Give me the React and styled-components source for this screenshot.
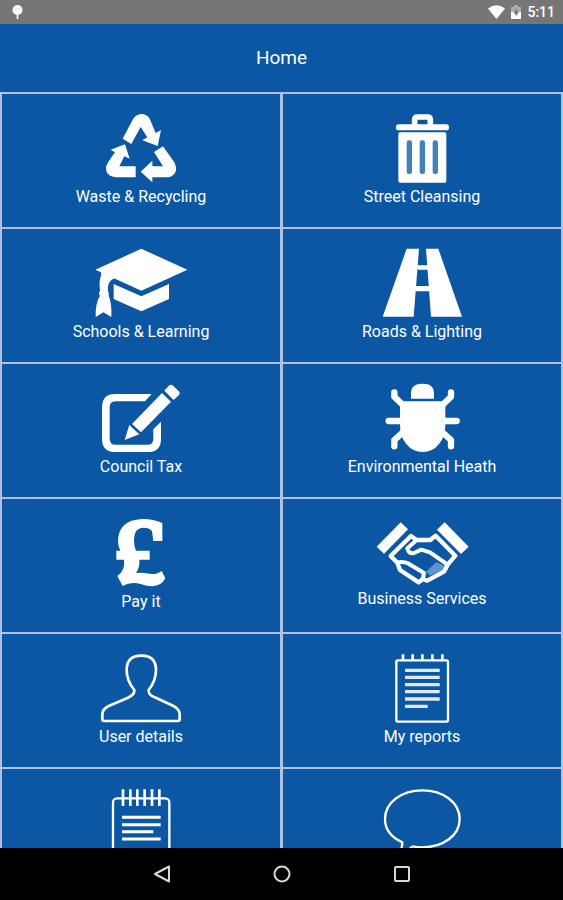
import React from "react"
import styled, { createGlobalStyle } from "styled-components"

const GlobalStyle = createGlobalStyle`
    * {
        box-sizing: border-box;
    }

    body {
        margin: 0;
        background: #0b57a4;
        font-family: Roboto, "Liberation Sans", sans-serif;
    }
`

const Screen = styled.div`
    display: flex;
    flex-direction: column;
    height: 100vh;
    color: white;
    background: #0b57a4;
`

const StatusBar = styled.div`
    display: flex;
    flex: none;
    align-items: center;
    justify-content: space-between;
    height: 24px;
    padding: 0 8px 0 12px;
    background: #767676;
`

const StatusGroup = styled.div`
    display: flex;
    align-items: center;
    gap: 6px;
    font-size: 14px;
    font-weight: 500;
    line-height: 24px;
`

const Header = styled.header`
    display: flex;
    flex: none;
    align-items: center;
    justify-content: center;
    height: 68px;

    h1 {
        margin: 0;
        font-size: 19px;
        font-weight: 400;
        line-height: 24px;
    }
`

const Menu = styled.main`
    flex: 1;
    min-height: 0;
    overflow-y: auto;
    scrollbar-width: none;
`

const Grid = styled.div`
    display: grid;
    grid-template-columns: 1fr 1fr;
    grid-auto-rows: 133px;
    gap: 2px 3px;
    padding: 2px;
    background: #b1c1e2;
`

const Tile = styled.button`
    display: flex;
    flex-direction: column;
    align-items: center;
    padding: 18px 0 0;
    border: none;
    color: white;
    background: #0b57a4;
    font-family: inherit;
    font-size: 16px;
    line-height: 20px;
    cursor: pointer;

    svg {
        flex: none;
        width: 96px;
        height: ${props => (props.$short ? 72 : 75)}px;
    }
`

const NavBar = styled.nav`
    display: flex;
    flex: none;
    align-items: center;
    justify-content: center;
    gap: 80px;
    height: 52px;
    background: black;

    button {
        display: flex;
        align-items: center;
        justify-content: center;
        width: 40px;
        height: 40px;
        padding: 0;
        border: none;
        background: transparent;
        cursor: pointer;
    }
`

// all tile drawings share a 3:1 scale, x and y give the corner of their canvas
const Drawing = ({ x, y, short, children }) => (
    <svg viewBox={`${x} ${y} 288 ${short ? 216 : 225}`} fill="white" aria-hidden="true">
        {children}
    </svg>
)

const Line = props => (
    <path fill="none" stroke="white" strokeLinejoin="round" {...props}/>
)

const RecycleIcon = () => (
    <Drawing x={9} y={21}>
        <path d="M98 101 L129 43 Q138 28 154 27 Q170 27 179 41 L197 84 L213 75 L203 123 L157 106 L172 97 L152 66 L124 117 Z"/>
        <path d="M62 134 L105 118 L119 161 L103 154 L88 184 H137 V217 H76 Q46 214 48 186 Q50 176 75 142 Z"/>
        <path d="M192 141 L219 124 L253 172 Q262 190 256 202 Q248 217 232 217 H187 V232 L152 200 L187 167 V184 H219 Z"/>
    </Drawing>
)

const BinIcon = () => (
    <Drawing x={12} y={21}>
        <Line d="M134 62 V44 Q134 36 142 36 H173 Q181 36 181 44 V62" strokeWidth="17"/>
        <rect x="78" y="58" width="159" height="18" rx="8"/>
        <rect x="85" y="82" width="144" height="151" rx="5"/>
        <g fill="#4282bb">
            <rect x="110" y="106" width="16" height="101" rx="7"/>
            <rect x="149" y="106" width="16" height="101" rx="7"/>
            <rect x="188" y="106" width="16" height="101" rx="7"/>
        </g>
    </Drawing>
)

const CapIcon = () => (
    <Drawing x={39} y={36}>
        <path d="M46 104 L184 41 L322 104 L184 167 Z"/>
        <path d="M101 147 L184 184 L267 147 V192 L184 229 L101 192 Z"/>
        <path d="M62 108 L106 128 Q80 138 84 168 Q89 176 86 182 Q96 206 94 246 L70 232 L47 246 Q46 204 60 182 Q54 175 60 168 Q56 136 64 120 Z"/>
    </Drawing>
)

const RoadIcon = () => (
    <Drawing x={12} y={36}>
        <path d="M110 41 H147 L131 245 H38 Z"/>
        <path d="M168 41 H205 L276 245 H183 Z"/>
        <path d="M142 91 H174 V104 H142 Z M136 153 H178 V169 H136 Z"/>
    </Drawing>
)

const PencilIcon = () => (
    <Drawing x={39} y={36}>
        <path d="M215 72 H106 Q66 72 66 112 V206 Q66 246 106 246 H204 Q243 246 243 206 V155 L220 178 V206 Q220 224 204 224 H106 Q89 224 89 206 V112 Q89 94 106 94 H195 Z"/>
        <path d="M156 162 L246 69 L273 95 L183 187 Z"/>
        <path d="M148 165 L178 193 L134 210 Z"/>
        <path d="M253 62 L266 48 Q273 41 280 48 L296 63 Q302 70 296 76 L281 90 Z"/>
    </Drawing>
)

const BugIcon = () => (
    <Drawing x={102} y={36}>
        <path d="M213 86 V70 Q213 41 248 41 Q282 41 282 70 V86 Z"/>
        <path d="M192 94 H304 L316 106 V165 Q316 200 297 222 Q278 246 248 246 Q218 246 199 222 Q180 200 180 165 V106 Z"/>
        <Line
            d="M163 67 V80 L192 108 M333 67 V80 L304 108 M146 153 H350 M163 229 V210 L192 184 M333 229 V210 L304 184"
            strokeWidth="19"
            strokeLinecap="round"
        />
    </Drawing>
)

const PoundIcon = () => (
    <Drawing x={9} y={36}>
        <path d="M217 108 V54 Q188 41 156 42 Q85 46 84 108 Q84 122 91 137 H79 V164 H102 Q106 196 82 213 L98 243 Q122 229 152 237 Q208 256 226 220 L215 198 Q198 212 168 205 Q155 202 138 204 Q150 188 148 164 H179 V137 H138 Q131 122 132 102 Q134 68 160 68 Q178 68 186 78 L190 108 Z"/>
    </Drawing>
)

const HandshakeIcon = () => (
    <Drawing x={72} y={36} short>
        <path d="M80 125 L152 52 L174 73 L102 146 Z"/>
        <path d="M261 74 L284 52 L356 125 L333 147 Z"/>
        <path d="M228 200 L258 172 L286 182 L280 194 L240 212 Z" fill="#5f93cd"/>
        <Line
            d="M183 93 L122 153 L142 173 L150 195 L206 232 L218 222 L232 227 L282 200 L293 179 L316 152 L257 92 L241 105 H200 Z"
            strokeWidth="13"
        />
        <Line
            d="M200 105 L172 130 Q176 148 192 144 L214 134 L240 142 L293 179 M142 173 Q158 168 176 176 L222 204 L218 226"
            strokeWidth="12"
        />
    </Drawing>
)

const UserIcon = () => (
    <Drawing x={39} y={36}>
        <Line
            d="M72 243 Q67 243 67 238 V222 Q68 206 88 197 L144 173 Q164 164 163 150 Q140 122 140 90 Q140 47 184 47 Q228 47 228 90 Q228 122 206 150 Q204 164 224 172 L276 196 Q299 207 299 222 V238 Q299 243 294 243 Z"
            strokeWidth="8"
        />
    </Drawing>
)

const ReportIcon = () => (
    <Drawing x={12} y={36}>
        <rect x="79" y="61" width="155" height="184" rx="5" fill="none" stroke="white" strokeWidth="7"/>
        <Line d="M99 43 V60 M128 43 V60 M157 43 V60 M187 43 V60 M217 43 V60" strokeWidth="8"/>
        <Line
            d="M105 91 H209 M105 112 H209 M105 134 H209 M105 155 H209 M105 177 H209 M105 199 H173"
            stroke="#e1e9f8"
            strokeWidth="10"
        />
    </Drawing>
)

const NotepadIcon = () => (
    <Drawing x={39} y={81}>
        <rect x="99" y="115" width="169" height="184" rx="12" fill="none" stroke="white" strokeWidth="7"/>
        <Line d="M129 88 V138 M151 88 V138 M172 88 V138 M194 88 V138 M216 88 V138 M238 88 V138" strokeWidth="8"/>
        <Line d="M126 172 H242 M126 194 H242 M126 215 H220 M126 237 H242" strokeWidth="9"/>
    </Drawing>
)

const SpeechIcon = () => (
    <Drawing x={882} y={81}>
        <Line
            d="M996 259 Q1012 262 1027 262 C1090 262 1139 226 1139 177 C1139 128 1090 91 1027 91 C964 91 915 128 915 177 C915 207 934 232 967 247 Q966 270 956 286 Q980 280 996 259"
            strokeWidth="7"
        />
    </Drawing>
)

const tiles = [
    { label: "Waste & Recycling", Icon: RecycleIcon },
    { label: "Street Cleansing", Icon: BinIcon },
    { label: "Schools & Learning", Icon: CapIcon },
    { label: "Roads & Lighting", Icon: RoadIcon },
    { label: "Council Tax", Icon: PencilIcon },
    { label: "Environmental Heath", Icon: BugIcon },
    { label: "Pay it", Icon: PoundIcon },
    { label: "Business Services", Icon: HandshakeIcon, short: true },
    { label: "User details", Icon: UserIcon },
    { label: "My reports", Icon: ReportIcon },
    { name: "Notes", Icon: NotepadIcon },
    { name: "Messages", Icon: SpeechIcon },
]

const App = () => {
    return (
        <Screen>
            <GlobalStyle/>
            <StatusBar>
                <svg width="12" height="16" viewBox="0 0 12 16" aria-hidden="true">
                    <circle cx="5.5" cy="6" r="5" fill="white"/>
                    <path d="M5.5 10 V15" stroke="white" strokeWidth="1.6"/>
                    <path d="M4 4.5 V6 M7 4.5 V6" stroke="#ccc"/>
                </svg>
                <StatusGroup>
                    <svg width="17" height="14" viewBox="0 0 17 14" aria-hidden="true">
                        <path d="M0 3.6 Q8.5 -3 17 3.6 L8.5 14 Z" fill="white"/>
                    </svg>
                    <svg width="10" height="14" viewBox="0 0 10 14" aria-hidden="true">
                        <path d="M0 2 H3 V0 H7 V2 H10 V14 H0 Z" fill="#adadad"/>
                        <path d="M0 7 H10 V14 H0 Z" fill="white"/>
                        <path d="M6 3 L2.5 8.6 H4.6 V12 L8 6.8 H6 Z" fill="#767676"/>
                    </svg>
                    <span>5:11</span>
                </StatusGroup>
            </StatusBar>
            <Header>
                <h1>Home</h1>
            </Header>
            <Menu>
                <Grid>
                    {tiles.map(({ label, name, Icon, short }) => (
                        <Tile key={label || name} type="button" aria-label={name} $short={short}>
                            <Icon/>
                            {label}
                        </Tile>
                    ))}
                </Grid>
            </Menu>
            <NavBar>
                <button type="button" aria-label="Back">
                    <svg width="18" height="18" viewBox="0 0 18 18" fill="none" stroke="#d8d8d8" strokeWidth="2">
                        <path d="M16 1.5 V16.5 L2 9 Z" strokeLinejoin="round"/>
                    </svg>
                </button>
                <button type="button" aria-label="Home">
                    <svg width="18" height="18" viewBox="0 0 18 18" fill="none" stroke="#d8d8d8" strokeWidth="2">
                        <circle cx="9" cy="9" r="7.5"/>
                    </svg>
                </button>
                <button type="button" aria-label="Recent apps">
                    <svg width="18" height="18" viewBox="0 0 18 18" fill="none" stroke="#d8d8d8" strokeWidth="2">
                        <rect x="2" y="2" width="14" height="14" rx="1"/>
                    </svg>
                </button>
            </NavBar>
        </Screen>
    )
}

export default App
